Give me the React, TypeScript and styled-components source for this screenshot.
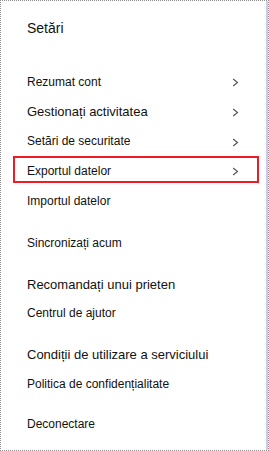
import React from "react";
import styled, { createGlobalStyle } from "styled-components";

const Global = createGlobalStyle`
  html, body { margin: 0; padding: 0; background: #ffffff; }
  body { font-family: "Liberation Sans", Arial, sans-serif; }
`;

const Frame = styled.div`
  box-sizing: border-box;
  width: 269px;
  height: 451px;
  border: 1px dotted #8e8e8e;
  box-shadow: inset -2px 0 0 #c9c9f2;
  background: #ffffff;
  padding: 17.4px 0 0 26px;
  color: #111111;
  overflow: hidden;
`;

const Title = styled.div`
  font-size: 14px;
  line-height: 20px;
  height: 20px;
  margin-bottom: 29.4px;
`;

const Group = styled.div`
  display: flex;
  flex-direction: column;
  margin-bottom: ${(p: { $gap?: number }) => (p.$gap ?? 11.5)}px;
`;

const Row = styled.div<{ $large?: boolean; $selected?: boolean }>`
  position: relative;
  display: flex;
  align-items: center;
  justify-content: space-between;
  height: 29.7px;
  width: 212px;
  font-size: ${(p) => (p.$large ? 13 : 12)}px;
  line-height: 29.7px;
  white-space: nowrap;
  ${(p) =>
    p.$selected &&
    `
    &::after {
      content: "";
      position: absolute;
      left: -14px;
      top: -1px;
      width: 246px;
      height: 27px;
      box-sizing: border-box;
      border: 2px solid #f01c24;
      pointer-events: none;
    }
  `}
`;

const Chevron = () => (
  <svg width="7" height="9" viewBox="0 0 7 9" style={{ display: "block" }}>
    <polyline
      points="1.2,1 5.5,4.5 1.2,8"
      fill="none"
      stroke="#505050"
      strokeWidth="1.1"
    />
  </svg>
);

type Item = { label: string; chevron?: boolean; large?: boolean; selected?: boolean };

const groups: Item[][] = [
  [
    { label: "Rezumat cont", chevron: true },
    { label: "Gestionați activitatea", chevron: true, large: true },
    { label: "Setări de securitate", chevron: true },
    { label: "Exportul datelor", chevron: true, selected: true },
    { label: "Importul datelor" },
  ],
  [{ label: "Sincronizați acum" }],
  [{ label: "Recomandați unui prieten", large: true }, { label: "Centrul de ajutor" }],
  [
    { label: "Condiții de utilizare a serviciului", large: true },
    { label: "Politica de confidențialitate" },
  ],
  [{ label: "Deconectare" }],
];

export default function App() {
  return (
    <>
      <Global />
      <Frame>
        <Title>Setări</Title>
        {groups.map((g, gi) => (
          <Group key={gi} $gap={gi === 0 ? 12.8 : 11}>
            {g.map((it) => (
              <Row key={it.label} $large={it.large} $selected={it.selected}>
                <span>{it.label}</span>
                {it.chevron && <Chevron />}
              </Row>
            ))}
          </Group>
        ))}
      </Frame>
    </>
  );
}
